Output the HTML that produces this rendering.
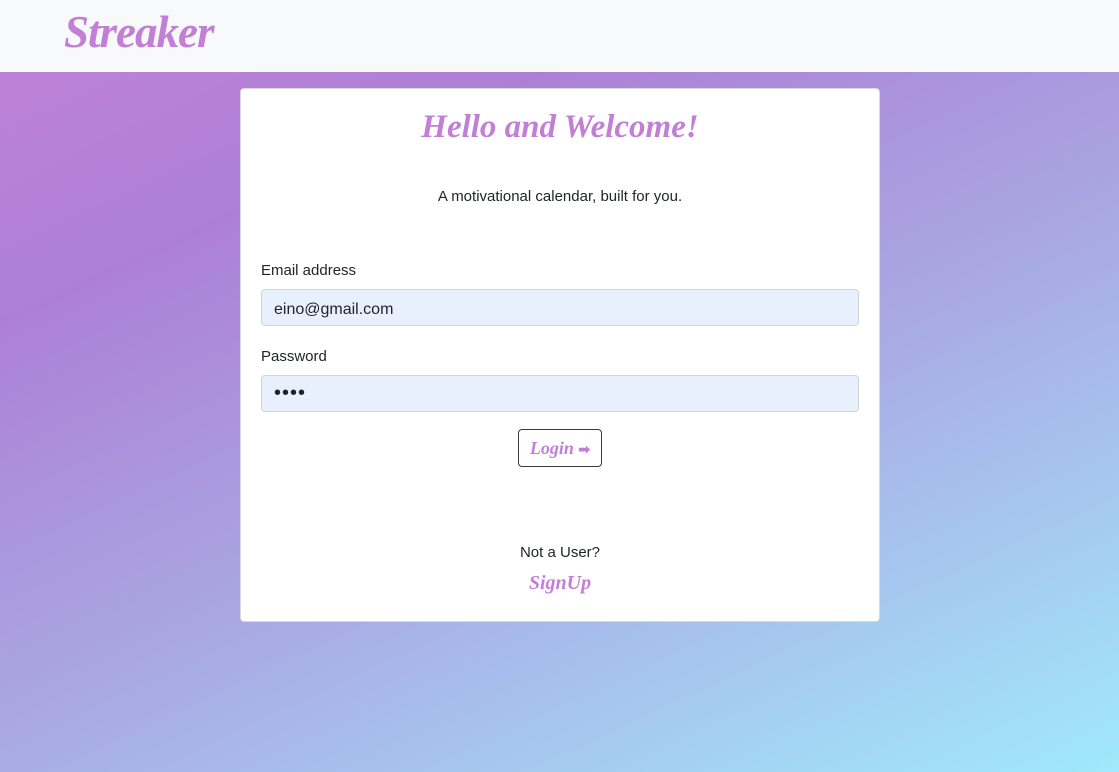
<!DOCTYPE html>
<html><head><style>
*{box-sizing:border-box;margin:0;padding:0}
body{width:1119px;height:772px;overflow:hidden;font-family:"Liberation Sans","DejaVu Sans",sans-serif;color:#212529;
background:linear-gradient(155deg,#c182d8 0%,#ad80d6 25%,#a9a6e2 55%,#a6c8ef 78%,#a0e9fb 100%);position:relative}
.nav{position:absolute;left:0;top:0;width:1119px;height:72px;background:#f8f9fa}
.brand{position:absolute;left:64px;top:6px;font-family:"Liberation Serif",serif;font-style:italic;font-weight:bold;font-size:45px;color:#c27fd6;letter-spacing:-1px}
.card{position:absolute;left:240px;top:88px;width:640px;height:534px;background:#fff;border:1px solid rgba(0,0,0,.15);border-radius:4px}
.h{position:absolute;left:0;width:100%;top:20px;text-align:center;font-family:"Liberation Serif",serif;font-style:italic;font-weight:bold;font-size:33px;color:#c27fd6}
.sub{position:absolute;left:0;width:100%;top:99px;text-align:center;font-size:15px}
.lbl{position:absolute;left:20px;font-size:15px}
.inp{position:absolute;left:20px;width:598px;height:37px;background:#e8f0fe;border:1px solid #ced4da;border-radius:4px;padding:11px 12px 0;font-size:16px;line-height:18px}
.btn{position:absolute;left:277px;top:340px;width:84px;height:38px;border:1px solid #343a40;border-radius:4px;text-align:center;line-height:36px;font-family:"Liberation Serif",serif;font-style:italic;font-weight:bold;font-size:18px;color:#c27fd6}
.c{position:absolute;left:0;width:100%;text-align:center}
</style></head><body>
<div class="nav"><div class="brand">Streaker</div></div>
<div class="card">
<div class="h">Hello and Welcome!</div>
<div class="sub">A motivational calendar, built for you.</div>
<div class="lbl" style="top:173px">Email address</div>
<div class="inp" style="top:200px">eino@gmail.com</div>
<div class="lbl" style="top:259px">Password</div>
<div class="inp" style="top:286px;font-size:20px;padding-top:8px;letter-spacing:1px">••••</div>
<div class="btn">Login <span style="font-style:normal;font-size:14px">➡</span></div>
<div class="c" style="top:455px;font-size:15px">Not a User?</div>
<div class="c" style="top:483px;font-family:'Liberation Serif',serif;font-style:italic;font-weight:bold;font-size:20px;color:#c27fd6">SignUp</div>
</div>
</body></html>
